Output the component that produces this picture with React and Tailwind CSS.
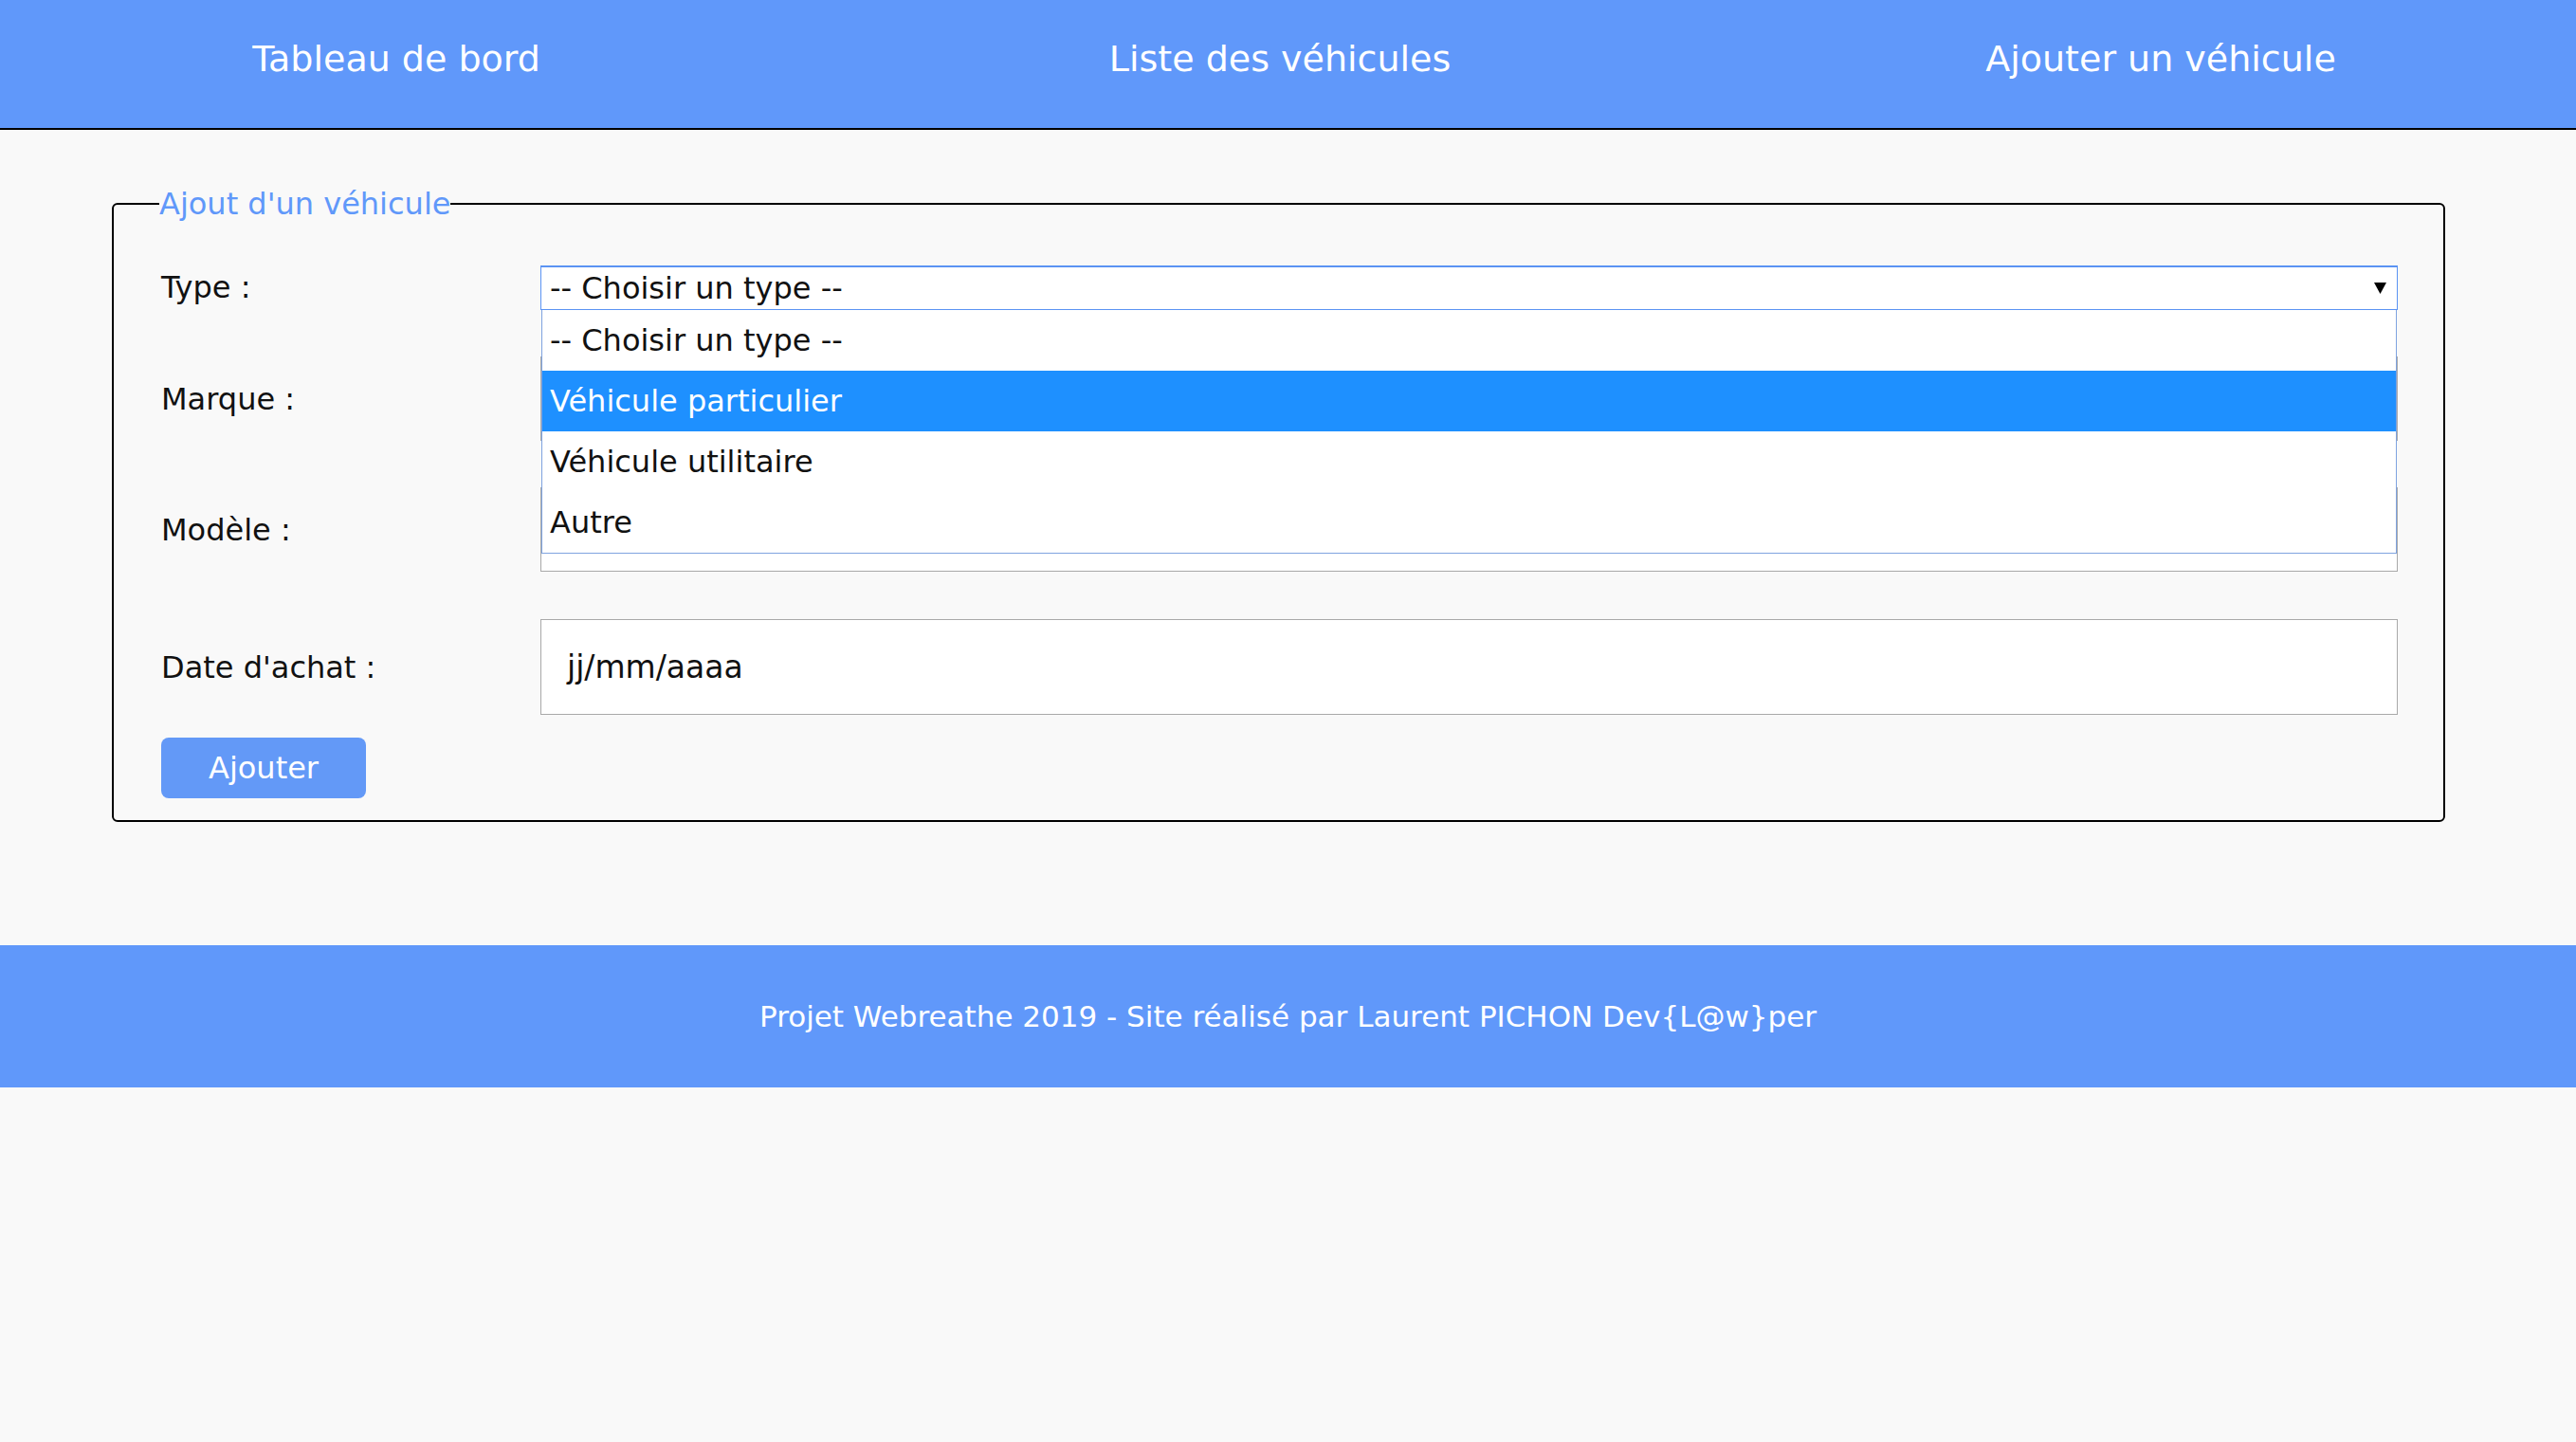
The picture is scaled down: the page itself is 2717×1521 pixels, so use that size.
const navLinks = ["Tableau de bord", "Liste des véhicules", "Ajouter un véhicule"];

const typeOptions = [
  { label: "-- Choisir un type --", active: false },
  { label: "Véhicule particulier", active: true },
  { label: "Véhicule utilitaire", active: false },
  { label: "Autre", active: false },
];

function FormRow({ label, className = "", children }) {
  return (
    <div className={`flex items-center ${className}`}>
      <label className="w-[400px] shrink-0 text-[32px] text-[#111]">{label}</label>
      <div className="flex-1">{children}</div>
    </div>
  );
}

function TextField({ value = "", height = "h-[89px]", pad = "pl-[27px]" }) {
  return (
    <div
      className={`${height} ${pad} flex items-center bg-white border border-[#a9a9a9] text-[33px] text-[#111]`}
    >
      {value}
    </div>
  );
}

export default function App() {
  return (
    <div className="min-h-screen bg-[#f9f9f9] font-['DejaVu_Sans',sans-serif]">
      {/* Navigation */}
      <header className="h-[137px] bg-[#6098fa] border-b-2 border-black grid grid-cols-[836px_1028px_830px] items-center pb-[11px] text-white text-[38px]">
        {navLinks.map((link) => (
          <a key={link} href="#" className="text-center">
            {link}
          </a>
        ))}
      </header>

      <main className="pl-[118px] pr-[138px] pt-[59px]">
        <fieldset className="border-2 border-black rounded-md pl-[50px] pr-[48px] pb-[23px]">
          <legend className="-ml-[2px] text-[32px] leading-[38px] text-[#6098fa]">
            Ajout d'un véhicule
          </legend>

          {/* Type select, opened */}
          <FormRow label="Type :" className="mt-[45px] relative z-10">
            <div className="relative">
              <div className="h-[47px] flex items-center justify-between pl-[9px] pr-[11px] bg-white border border-[#5b93f3] border-t-2 text-[32px] text-[#111]">
                <span>-- Choisir un type --</span>
                <svg width="13" height="12" viewBox="0 0 13 12">
                  <path d="M0 0 L13 0 L6.5 12 Z" fill="#000" />
                </svg>
              </div>
              <ul className="absolute top-full left-[1px] right-[1px] bg-white border border-t-0 border-[#7fa3e0]">
                {typeOptions.map((opt) => (
                  <li
                    key={opt.label}
                    className={`h-[64px] flex items-center pl-[8px] text-[32px] ${
                      opt.active ? "bg-[#1e90ff] text-white" : "text-[#111]"
                    }`}
                  >
                    {opt.label}
                  </li>
                ))}
              </ul>
            </div>
          </FormRow>

          <FormRow label="Marque :" className="mt-[49px]">
            <TextField />
          </FormRow>

          <FormRow label="Modèle :" className="mt-[49px]">
            <TextField />
          </FormRow>

          <FormRow label="Date d'achat :" className="mt-[50px]">
            <TextField value="jj/mm/aaaa" height="h-[101px]" />
          </FormRow>

          <button className="mt-[24px] w-[216px] h-[64px] rounded-[8px] bg-[#6399f7] text-white text-[32px]">
            Ajouter
          </button>
        </fieldset>
      </main>

      <footer className="mt-[130px] h-[150px] bg-[#6098fa] flex items-center justify-center text-white text-[31px]">
        Projet Webreathe 2019 - Site réalisé par Laurent PICHON Dev{"{"}L@w{"}"}per
      </footer>
    </div>
  );
}
